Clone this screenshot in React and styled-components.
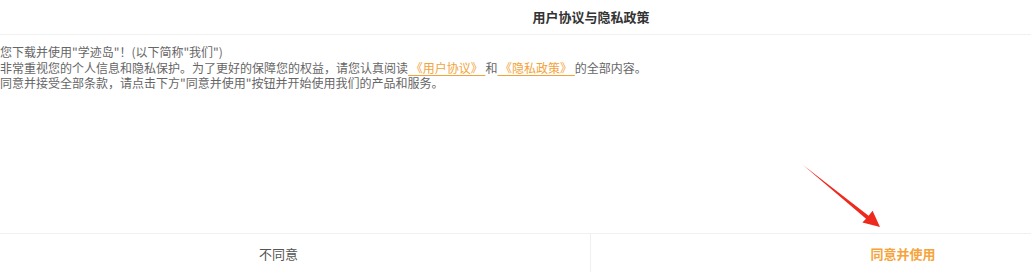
import React from 'react';
import styled, { createGlobalStyle } from 'styled-components';

const Global = createGlobalStyle`
    html, body {
        margin : 0;
        padding : 0;
        background : #fff;
        overflow : hidden;
    }
    body {
        font-family : "Noto Sans CJK SC", "Noto Sans", sans-serif;
    }
`;

const Page = styled.div`
    position : relative;
    width : 1031px;
    height : 272px;
    overflow : hidden;
`;

const Modal = styled.div`
    width : 1248px;
    margin-left : -33px;
    display : flex;
    flex-direction : column;
    background : #fff;
`;

const Header = styled.div`
    height : 32px;
    padding-bottom : 2px;
    display : flex;
    align-items : center;
    justify-content : center;
    border-bottom : 1px solid #f0f0f0;
    font-size : 13px;
    font-weight : 700;
    color : #333;
`;

const Body = styled.div`
    height : 189px;
    padding : 9px 33px 0;
    font-size : 12px;
    line-height : 15.5px;
    color : #666;
    p {
        margin : 0;
    }
`;

const Link = styled.span`
    color : #f2a33a;
    text-decoration : underline;
    text-underline-offset : 2px;
    white-space : pre;
`;

const Footer = styled.div`
    display : grid;
    grid-template-columns : 623px 1fr;
    height : 44px;
    border-top : 1px solid #f0f0f0;
`;

const Action = styled.div`
    display : flex;
    align-items : center;
    justify-content : center;
    font-size : 13px;
    color : ${p => (p.primary ? '#f5a43b' : '#555')};
    font-weight : ${p => (p.primary ? 700 : 400)};
    border-left : ${p => (p.primary ? '1px solid #f0f0f0' : 'none')};
    padding-bottom : 5px;
`;

const Arrow = styled.svg`
    position : absolute;
    left : 0;
    top : 0;
    width : 1031px;
    height : 272px;
    pointer-events : none;
`;

function App() {
    return (
        <Page>
            <Global />
            <Modal>
                <Header>用户协议与隐私政策</Header>
                <Body>
                    <p>您下载并使用"学迹岛"！(以下简称"我们")</p>
                    <p>
                        非常重视您的个人信息和隐私保护。为了更好的保障您的权益，请您认真阅读
                        <Link> 《用户协议》 </Link>和<Link> 《隐私政策》 </Link>的全部内容。
                    </p>
                    <p>同意并接受全部条款，请点击下方"同意并使用"按钮并开始使用我们的产品和服务。</p>
                </Body>
                <Footer>
                    <Action>不同意</Action>
                    <Action primary>同意并使用</Action>
                </Footer>
            </Modal>
            <Arrow viewBox="0 0 1031 272">
                <polygon
                    points="803,165 868.6,215.7 872.6,210.8 880,227 862.4,222.4 866,218.8"
                    fill="#ee2a1f"
                />
            </Arrow>
        </Page>
    );
}

export default App;
